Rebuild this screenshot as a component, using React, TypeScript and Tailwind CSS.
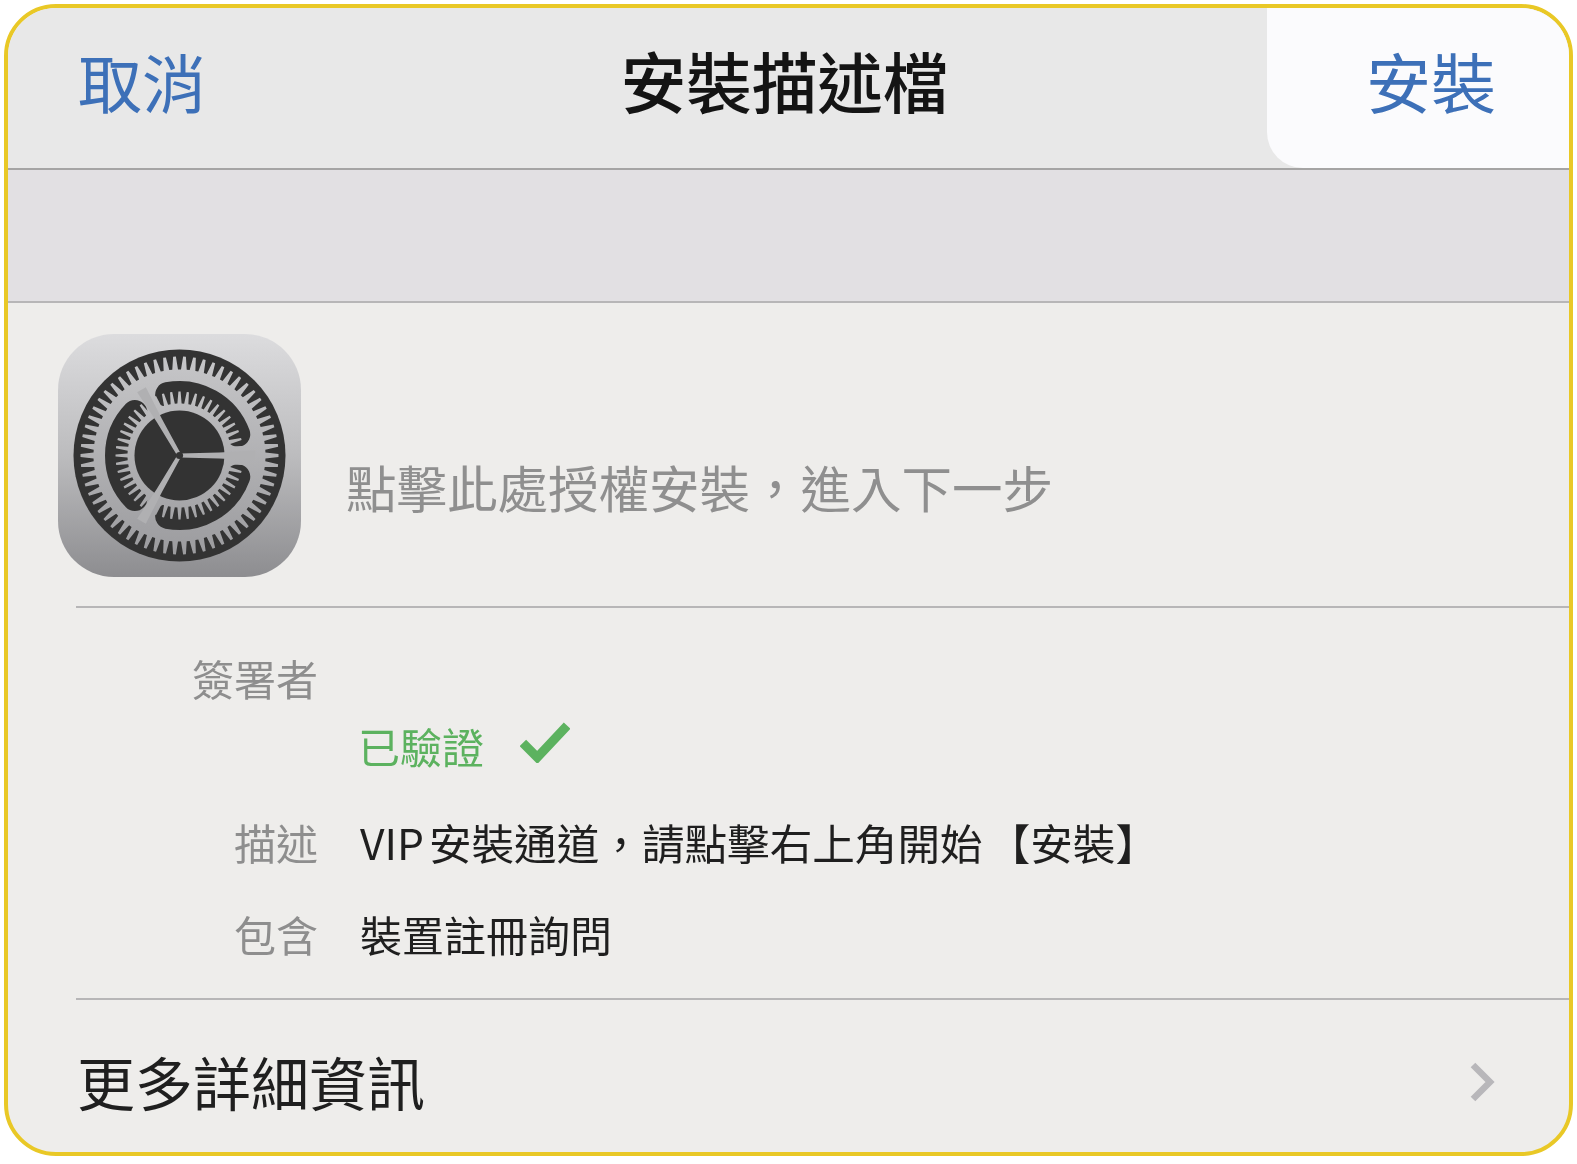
import React from "react";

const CJK = '"Noto Sans CJK TC", "Noto Sans CJK SC", sans-serif';

function gearPath(cx: number, cy: number, n: number, rIn: number, rOut: number, d: number) {
  const pts: string[] = [];
  const step = (Math.PI * 2) / n;
  for (let i = 0; i < n; i++) {
    const a = i * step;
    const w0 = step * d;
    const w1 = step * (d * 0.42);
    const p = (r: number, t: number) =>
      `${(cx + r * Math.cos(t)).toFixed(2)} ${(cy + r * Math.sin(t)).toFixed(2)}`;
    pts.push(`${i === 0 ? "M" : "L"}${p(rIn, a - w0 / 2)}`);
    pts.push(`L${p(rOut, a - w1 / 2)}`);
    pts.push(`L${p(rOut, a + w1 / 2)}`);
    pts.push(`L${p(rIn, a + w0 / 2)}`);
  }
  return pts.join(" ") + "Z";
}

function arcPath(cx: number, cy: number, r: number, from: number, to: number) {
  const rad = (v: number) => (v * Math.PI) / 180;
  const x0 = cx + r * Math.cos(rad(from));
  const y0 = cy + r * Math.sin(rad(from));
  const x1 = cx + r * Math.cos(rad(to));
  const y1 = cy + r * Math.sin(rad(to));
  return `M${x0.toFixed(2)} ${y0.toFixed(2)} A${r} ${r} 0 0 1 ${x1.toFixed(2)} ${y1.toFixed(2)}`;
}

function SettingsIcon() {
  const c = 121.5;
  const spoke = `${c},${c - 2} ${c + 40},${c - 3} ${c + 76},${c - 5} ${c + 76},${c + 5} ${c + 40},${c + 3} ${c},${c + 2}`;
  return (
    <svg width="243" height="243" viewBox="0 0 243 243" className="block shrink-0 rounded-[56px] blur-[0.7px]">
      <defs>
        <linearGradient id="bg" x1="0" y1="0" x2="0" y2="1">
          <stop offset="0" stopColor="#dcdcde" />
          <stop offset="0.5" stopColor="#bcbcbe" />
          <stop offset="1" stopColor="#8d8d90" />
        </linearGradient>
        <linearGradient id="metal" gradientUnits="userSpaceOnUse" x1="0" y1="15" x2="0" y2="228">
          <stop offset="0" stopColor="#c8c8ca" />
          <stop offset="1" stopColor="#9a9a9d" />
        </linearGradient>
      </defs>
      <rect width="243" height="243" fill="url(#bg)" />
      <circle cx={c} cy={c} r="106" fill="#333333" />
      <path d={gearPath(c, c, 62, 86, 99, 0.66)} fill="url(#metal)" />
      <g fill="none" stroke="#333333" strokeWidth="25" strokeLinecap="round">
        <path d={arcPath(c, c, 62, -101, -20)} />
        <path d={arcPath(c, c, 62, 20, 101)} />
        <path d={arcPath(c, c, 62, 136, 224)} />
      </g>
      <path d={gearPath(c, c, 48, 52, 64, 0.62)} fill="url(#metal)" />
      <circle cx={c} cy={c} r="45" fill="#333333" />
      <g fill="#b0b0b2">
        <polygon points={spoke} />
        <polygon points={spoke} transform={`rotate(120 ${c} ${c})`} />
        <polygon points={spoke} transform={`rotate(240 ${c} ${c})`} />
      </g>
      <circle cx={c} cy={c} r="3.6" fill="#333333" />
    </svg>
  );
}

export default function App() {
  return (
    <div className="w-[1577px] h-[1164px] bg-white p-1" style={{ fontFamily: CJK }}>
      <div className="h-[1152px] border-4 border-[#e9c826] rounded-[52px] overflow-hidden bg-[#eeedeb] flex flex-col">
        <header className="h-[162px] shrink-0 bg-[#e8e8e8] border-b-2 border-[#a5a4a4] flex items-center justify-between">
          <span className="pl-[70px] text-[64px] leading-none text-[#3d70b8] -mt-[16px] w-[302px] blur-[0.4px]">取消</span>
          <span className="text-[65.5px] leading-none font-medium text-[#141414] -mt-[16px] ml-[-8px] blur-[0.4px]">安裝描述檔</span>
          <div className="w-[302px] h-full bg-[#fbfbfd] rounded-bl-[36px] flex items-center justify-end pr-[73px]">
            <span className="text-[65px] leading-none text-[#3d70b8] -mt-[16px] blur-[0.4px]">安裝</span>
          </div>
        </header>
        <div className="h-[133px] shrink-0 bg-[#e2e0e3] border-b-2 border-[#b7b6b7]" />
        <section className="ml-[68px] border-b-2 border-[#b7b6b7] h-[305px] shrink-0">
          <div className="flex items-start pt-[31px] -ml-[18px]">
            <SettingsIcon />
            <span className="ml-[45px] mt-[127px] text-[50.5px] leading-none text-[#8f8f8f] whitespace-nowrap blur-[0.4px]">點擊此處授權安裝，進入下一步</span>
          </div>
        </section>
        <section className="ml-[68px] border-b-2 border-[#b7b6b7] h-[392px] shrink-0 pt-[49px]">
          <div className="grid grid-cols-[242px_1fr] gap-x-[42px] text-[42px] leading-none">
            <span className="text-right text-[#8e8e8e] blur-[0.4px]">簽署者</span>
            <span />
            <span />
            <span className="flex items-center gap-[36px] mt-[26px] -ml-[2px] text-[#5cb25f] blur-[0.4px]">
              已驗證
              <svg width="50" height="42" viewBox="0 0 52 42" className="block -mt-[8px]">
                <path d="M3 22 L18 37 L49 4" fill="none" stroke="#5cb25f" strokeWidth="9.5" />
              </svg>
            </span>
            <span className="text-right text-[#8e8e8e] mt-[54px] blur-[0.4px]">描述</span>
            <span className="text-[42.6px] text-[#1f1f1f] mt-[54px] whitespace-nowrap blur-[0.4px]">VIP<span className="ml-[5px]">安裝通道，請點擊右上角開始</span><span className="ml-[5px]">【安裝】</span></span>
            <span className="text-right text-[#8e8e8e] mt-[49px] blur-[0.4px]">包含</span>
            <span className="text-[#1f1f1f] mt-[49px] whitespace-nowrap blur-[0.4px]">裝置註冊詢問</span>
          </div>
        </section>
        <div className="flex-1 pl-[69px] pr-[74px] flex items-center justify-between">
          <span className="text-[58px] leading-none text-[#1f1f1f] mt-[10px] blur-[0.4px]">更多詳細資訊</span>
          <svg width="26" height="42" viewBox="0 0 26 42" className="block mt-[12px]">
            <path d="M4 4 L21 21 L4 38" fill="none" stroke="#b8b7ba" strokeWidth="6.5" />
          </svg>
        </div>
      </div>
    </div>
  );
}
